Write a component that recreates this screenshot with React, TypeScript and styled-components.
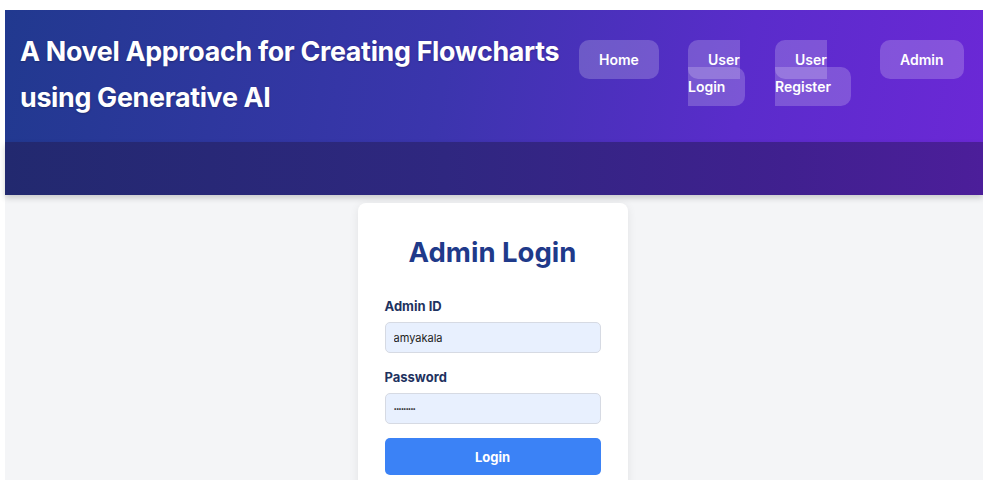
import styled, { createGlobalStyle } from 'styled-components';

const GlobalStyle = createGlobalStyle`
    html, body {
        margin: 0;
        padding: 0;
        background: #ffffff;
    }
    body {
        padding: 10px 0 0 5px;
        font-family: Inter, "Noto Sans", "Liberation Sans", sans-serif;
        overflow: hidden;
    }
`;

const Page = styled.div`
    background: #f4f5f7;
    min-height: 470px;
`;

const Header = styled.header`
    display: flex;
    justify-content: space-between;
    align-items: flex-start;
    height: 132px;
    box-sizing: border-box;
    padding: 18px 17px 0 15px;
    background: linear-gradient(100deg, #21398f 0%, #3b35ad 45%, #5a2ccb 75%, #6b28d6 100%);
`;

const Title = styled.h1`
    margin: 0;
    width: 552px;
    color: #ffffff;
    font-size: 26.8px;
    font-weight: 700;
    line-height: 46px;
    letter-spacing: -0.3px;
    text-shadow: 0 1px 2px rgba(0, 0, 0, 0.25);
`;

const NavList = styled.ul`
    display: flex;
    gap: 27px;
    list-style: none;
    margin: 0;
    padding: 18px 0 0 0;
`;

const NavItem = styled.li<{ $w: number }>`
    width: ${(p) => p.$w}px;
    line-height: 26px;
`;

const NavLink = styled.a`
    padding: 11px 20px;
    border-radius: 10px;
    background: rgba(255, 255, 255, 0.2);
    color: #ffffff;
    font-size: 14px;
    font-weight: 600;
    text-decoration: none;
`;

const SubBar = styled.div`
    height: 53px;
    background: linear-gradient(90deg, #22296f 0%, #2f2780 45%, #40208f 80%, #4c1e9a 100%);
    box-shadow: 0 3px 6px rgba(0, 0, 0, 0.18);
`;

const Main = styled.main`
    display: flex;
    justify-content: center;
    padding: 8px 0 0 0;
`;

const Card = styled.div`
    width: 270px;
    margin-left: -3px;
    box-sizing: border-box;
    padding: 32px 27px 24px;
    background: #ffffff;
    border-radius: 8px;
    box-shadow: 0 2px 10px rgba(0, 0, 0, 0.08);
`;

const CardTitle = styled.h2`
    margin: 0 0 29px;
    text-align: center;
    color: #1f3a8a;
    font-size: 27.5px;
    font-weight: 700;
`;

const Label = styled.label`
    display: block;
    margin-bottom: 8px;
    color: #1e3260;
    font-size: 13px;
    font-weight: 700;
`;

const Field = styled.div`
    margin-bottom: 16px;
`;

const Input = styled.input`
    display: block;
    width: 100%;
    height: 31px;
    box-sizing: border-box;
    padding: 0 8px;
    border: 1px solid #d6dae3;
    border-radius: 5px;
    background: #e8f0fe;
    color: #222222;
    font-family: inherit;
    font-size: 11px;
    outline: none;

    &[type='password'] {
        font-size: 6px;
        letter-spacing: -1px;
    }
`;

const SubmitButton = styled.button`
    display: block;
    width: 100%;
    height: 37px;
    margin-top: -2px;
    border: none;
    border-radius: 5px;
    background: #3b82f6;
    color: #ffffff;
    font-family: inherit;
    font-size: 13px;
    font-weight: 700;
`;

const links = [
    { label: 'Home', w: 82 },
    { label: 'User Login', w: 60 },
    { label: 'User Register', w: 78 },
    { label: 'Admin', w: 86 },
];

export default function App() {
    return (
        <>
            <GlobalStyle />
            <Page>
                <Header>
                    <Title>A Novel Approach for Creating Flowcharts using Generative AI</Title>
                    <nav>
                        <NavList>
                            {links.map((link) => (
                                <NavItem key={link.label} $w={link.w}>
                                    <NavLink href="#">{link.label}</NavLink>
                                </NavItem>
                            ))}
                        </NavList>
                    </nav>
                </Header>
                <SubBar />
                <Main>
                    <Card>
                        <CardTitle>Admin Login</CardTitle>
                        <Field>
                            <Label>Admin ID</Label>
                            <Input type="text" defaultValue="amyakala" />
                        </Field>
                        <Field>
                            <Label>Password</Label>
                            <Input type="password" defaultValue="amyakala1" />
                        </Field>
                        <SubmitButton>Login</SubmitButton>
                    </Card>
                </Main>
            </Page>
        </>
    );
}
